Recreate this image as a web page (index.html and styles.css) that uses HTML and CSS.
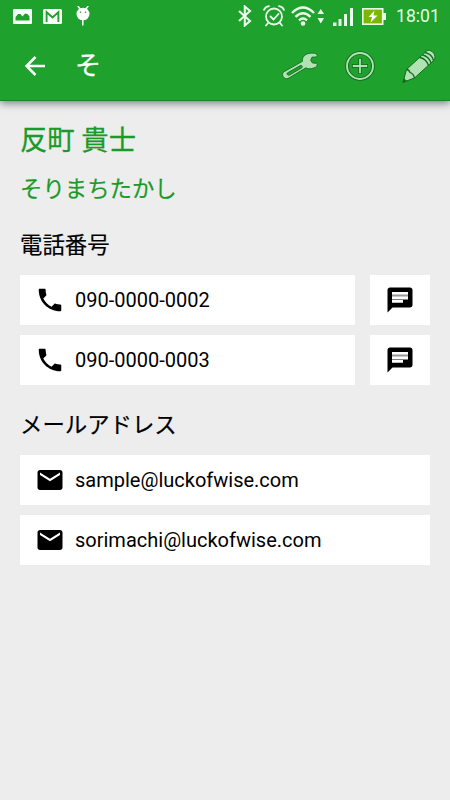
FILE: index.html
```html
<!DOCTYPE html>
<html lang="ja">
<head>
<meta charset="utf-8">
<title>反町 貴士</title>
<link rel="stylesheet" href="styles.css">
</head>
<body>
<svg class="defs" aria-hidden="true">
  <symbol id="call" viewBox="0 0 24 24"><path d="M6.620 10.790c1.440 2.830 3.760 5.140 6.590 6.590l2.200-2.200c.27-.27.67-.36 1.020-.24 1.120.37 2.330.57 3.570.57.55 0 1 .2 1 .6V20.400c0 .4-.45.6-1 .6-9.390 0-17-7.610-17-17 0-.55.2-1 .6-1h4.200c.4 0 .7.450.7 1 0 1.250.2 2.450.57 3.570.11.350.03.740-.25 1.020l-2.200 2.200z"/></symbol>
  <symbol id="chat" viewBox="0 0 24 24"><path d="M20 2H4c-1.100 0-1.990.9-1.990 2L2 22l4-4h14c1.100 0 2-.9 2-2V4c0-1.100-.9-2-2-2z"/><path fill="#fff" d="M5.600 5.600h12.800v6H5.600zM5.600 12h8.800v2.200H5.600z"/><path fill="#999" d="M5.600 7.600h12.800v1.600H5.600z"/></symbol>
  <symbol id="mail" viewBox="0 0 24 24"><path d="M20 4H4c-1.100 0-1.990.9-1.990 2L2 18c0 1.100.9 2 2 2h16c1.100 0 2-.9 2-2V6c0-1.100-.9-2-2-2zm0 4l-8 5-8-5V6l8 5 8-5v2z"/></symbol>
</svg>

<header class="header">
  <div class="status">
    <div class="status-left">
      <svg width="19" height="15" viewBox="0 0 19 15"><path fill="#fff" fill-rule="evenodd" d="M1 0h17q1 0 1 1v13q0 1-1 1H1q-1 0-1-1V1q0-1 1-1zM2.500 11.500h14V7.500L14.500 5 12 4.500 9.500 7.500 7.500 5H5L2.500 8z"/></svg>
      <svg width="19" height="15" viewBox="0 0 19 15"><rect width="19" height="15" rx="1.500" fill="#fff"/><path d="M3.600 13V3.200L9.500 8.400l5.900-5.200V13" fill="none" stroke="#1ea12d" stroke-width="1.900"/></svg>
      <svg class="droid" width="14" height="20" viewBox="0 0 14 20"><path d="M2 0l2 3M12 0l-2 3M6.800 12v7" stroke="#fff" stroke-width="1.500" stroke-linecap="round"/><ellipse cx="7" cy="8" rx="6.500" ry="6.300" fill="#fff"/><circle cx="4.500" cy="6.300" r=".8" fill="#1ea12d"/><circle cx="9.500" cy="6.300" r=".8" fill="#1ea12d"/></svg>
    </div>
    <div class="status-right">
      <svg class="bt" width="14" height="22" viewBox="0 0 14 22"><path d="M1 6l11 10-5.200 4.500v-19L12 6 1 16" fill="none" stroke="#eaffea" stroke-width="2.100"/></svg>
      <svg class="alarm" width="22" height="22" viewBox="0 0 22 22" fill="none" stroke="#eaffea" stroke-width="1.800" stroke-linecap="round"><circle cx="11" cy="11.500" r="8"/><path d="M7.500 11.500l3 3 5-5.500M1 4.800Q2.500 1.500 6 1.200M21 4.800Q19.500 1.500 16 1.200M5 18l-2 2.500M17 18l2 2.500"/></svg>
      <svg class="wifi" width="34" height="20" viewBox="0 0 34 20"><path d="M1 7q11-11 22 0M4.500 10.800q7.500-7 15 0M8 14.300q4-3.500 8 0" fill="none" stroke="#eaffea" stroke-width="2.400"/><circle cx="12" cy="17.500" r="2.300" fill="#eaffea"/><path d="M26.500 8l3.300-5L33 8zM26.500 12l3.300 5.500L33 12z" fill="#eaffea"/></svg>
      <svg class="signal" width="21" height="18" viewBox="0 0 21 18"><path d="M0 14.500h3.500V18H0zM5.500 11h3v7h-3zM11 6h3v12h-3zM17 0h3v18h-3z" fill="#eaffea"/></svg>
      <svg class="battery" width="24" height="17" viewBox="0 0 24 17"><path d="M21 5h3v7h-3z" fill="#eaffea"/><rect x=".8" y=".8" width="19.900" height="15.400" fill="#7ab800" stroke="#eaffea" stroke-width="1.600"/><path d="M12.500 2.500L6.500 9H10l-1.500 5.500L15.500 7.500H11.500z" fill="#fff"/></svg>
      <span class="clock">18:01</span>
    </div>
  </div>
  <div class="appbar">
    <svg class="back" width="20" height="20" viewBox="0 0 20 20"><path d="M20 10H2M10.500 1L1.500 10l9 9" fill="none" stroke="#fff" stroke-width="2.500"/></svg>
    <h1 class="title">そ</h1>
    <div class="actions">
      <svg width="36" height="28" viewBox="0 0 36 28"><path fill="#b0e2b4" stroke="#116b1d" stroke-width=".9" stroke-linejoin="round" fill-rule="evenodd" d="M1.500 20L20.500 9.300C19.500 4 25 .2 32.500 1.300C35.500 1.800 36 4.500 34 5L30 5.200 28.700 8.300 30.500 11 34.500 11.300C36.300 12 35 15 32 16 28.500 17.200 25.500 17 24 15.800L6 26.500C1.800 28-1 22.500 1.500 20zM5.300 22.500C4.800 21.800 5 21.200 5.600 20.800L18 13.700C20 12.800 21.200 14.800 19.500 16L7.500 23C6.500 23.500 5.700 23.200 5.300 22.500z"/></svg>
      <svg class="add" width="30" height="30" viewBox="0 0 30 30" fill="none"><circle cx="15" cy="15" r="13" stroke="#116b1d" stroke-width="3.600"/><circle cx="15" cy="15" r="13" stroke="#b0e2b4" stroke-width="1.900"/><path d="M15 7v16M7 15h16" stroke="#116b1d" stroke-width="3.400"/><path d="M15 7.800v14.400M7.800 15h14.400" stroke="#b0e2b4" stroke-width="1.800"/></svg>
      <svg class="edit" width="34" height="34" viewBox="0 0 34 34" stroke="#116b1d" stroke-width="1" stroke-linejoin="round"><path fill="#b0e2b4" d="M1 33.300L4.500 20.500 23.500 3C27-2 36 5 32 11.200L12.500 29z"/><path fill="none" stroke-width="1.300" d="M4.500 20.500Q7 20.500 8 23.500 11.500 24.500 12.500 29M17.800 8.500Q24.500 10 26.500 16.500M20.500 6Q27 7.500 29 14M23 3.500Q30 5 31.500 11.500"/><path fill="#116b1d" d="M1 33.300l1-3.500 2.500 2.300z"/></svg>
    </div>
  </div>
</header>

<main class="content">
  <h2 class="name">反町 貴士</h2>
  <p class="kana">そりまちたかし</p>

  <h3 class="label">電話番号</h3>
  <div class="row">
    <div class="card"><svg class="icon"><use href="#call"/></svg><span>090-0000-0002</span></div>
    <div class="card sms"><svg class="icon"><use href="#chat"/></svg></div>
  </div>
  <div class="row">
    <div class="card"><svg class="icon"><use href="#call"/></svg><span>090-0000-0003</span></div>
    <div class="card sms"><svg class="icon"><use href="#chat"/></svg></div>
  </div>

  <h3 class="label mail-label">メールアドレス</h3>
  <div class="row">
    <div class="card"><svg class="icon"><use href="#mail"/></svg><span>sample@luckofwise.com</span></div>
  </div>
  <div class="row">
    <div class="card"><svg class="icon"><use href="#mail"/></svg><span>sorimachi@luckofwise.com</span></div>
  </div>
</main>
</body>
</html>
```
FILE: styles.css
```css
* { box-sizing: border-box; margin: 0; padding: 0; }

body {
  width: 450px;
  height: 800px;
  overflow: hidden;
  background: #ededed;
  color: #000;
  font-family: Roboto, "Noto Sans CJK JP", sans-serif;
}

svg { display: block; flex: none; }
.defs { display: none; }

.header {
  height: 101px;
  background: #1ea12d;
  border-bottom: 1px solid #178625;
  box-shadow: 0 2px 8px rgba(0, 0, 0, .5);
}

.status {
  display: flex;
  justify-content: space-between;
  height: 32px;
  padding: 0 11px 0 13px;
}
.status-left, .status-right { display: flex; align-items: center; }
.status-left { gap: 11px; }
.droid { margin-left: 3px; }
.alarm { margin-left: 11px; }
.wifi { margin-left: 6px; }
.signal { margin-left: 8px; margin-top: 2px; }
.battery { margin-left: 8px; }
.clock {
  width: 43px;
  margin-left: 10px;
  color: #e4ffe4;
  font-size: 17.6px;
  line-height: 32px;
  white-space: nowrap;
}

.appbar {
  display: flex;
  align-items: center;
  height: 68px;
  padding: 0 14px 0 25px;
}
.title {
  margin-left: 30px;
  color: #fff;
  font-size: 26px;
  font-weight: 400;
  line-height: 36px;
  -webkit-text-stroke: .3px currentColor;
}
.actions { display: flex; align-items: center; margin-left: auto; }
.add { margin-left: 27px; }
.edit { margin-left: 27px; }

.content { padding: 21px 20px 0; }

.name {
  color: #1a9a2a;
  font-size: 27.3px;
  font-weight: 400;
  line-height: 38px;
  -webkit-text-stroke: .3px currentColor;
}
.kana {
  margin-top: 12px;
  color: #1a9a2a;
  font-size: 22.4px;
  line-height: 34px;
  -webkit-text-stroke: .2px currentColor;
}
.label {
  margin-top: 22px;
  margin-bottom: 13px;
  font-size: 22.4px;
  font-weight: 400;
  line-height: 34px;
  -webkit-text-stroke: .2px currentColor;
}

.row { display: flex; gap: 15px; margin-bottom: 10px; }
.mail-label { margin-top: 23px; }
.card {
  display: flex;
  flex: 1;
  align-items: center;
  gap: 10px;
  height: 50px;
  padding: 0 15px;
  background: #fff;
  font-size: 20px;
}
.sms { flex: 0 0 60px; }
.icon { width: 30px; height: 30px; }
```
